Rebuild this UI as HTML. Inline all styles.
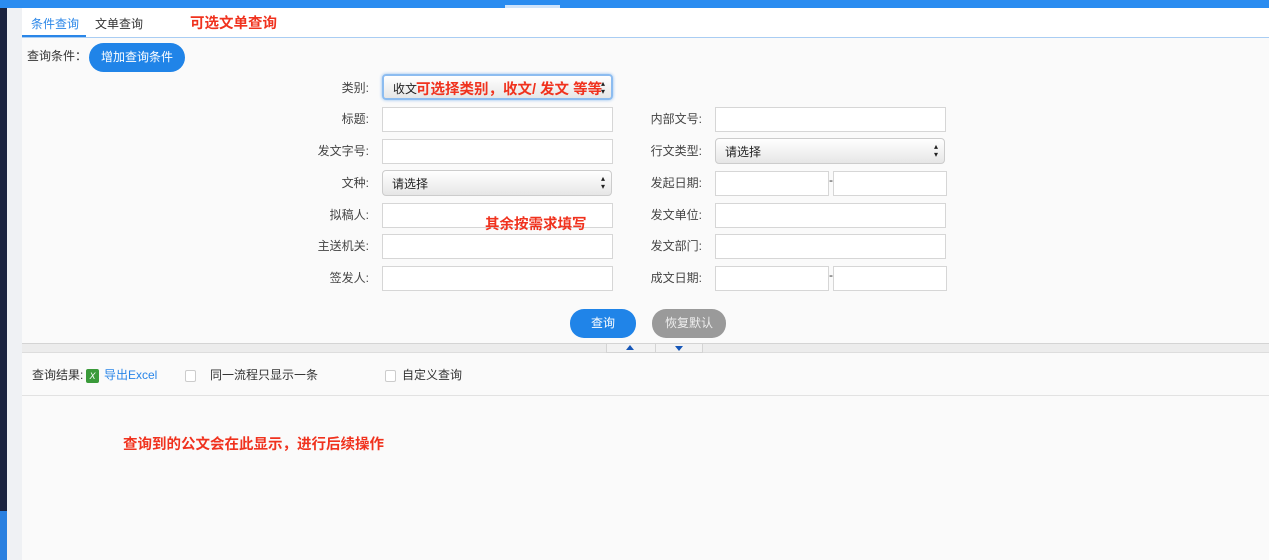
<!DOCTYPE html><html><head><meta charset="utf-8"><style>
*{margin:0;padding:0;box-sizing:border-box}
body{width:1269px;height:560px;overflow:hidden;position:relative;background:#fafafa;font-family:"Liberation Sans","Noto Sans CJK SC",sans-serif;font-size:12px;color:#333}
.a{position:absolute}
.lbl{position:absolute;text-align:right;width:100px;font-size:12px;color:#444}
.in{position:absolute;height:25px;background:#fff;border:1px solid #d6d6d6}
.sel{position:absolute;height:26px;border:1px solid #ccc;border-radius:4px;background:linear-gradient(#fff,#e6e6e6);font-size:12px;padding:4px 0 0 9px;color:#222}
.sel:after{content:"\25B4\A\25BE";white-space:pre;position:absolute;right:6px;top:4px;font-size:8px;line-height:8px;color:#222}
.red{position:absolute;color:#f0321e;font-weight:bold;font-size:14.5px}
</style></head><body>
<div class="a" style="left:0;top:0;width:1269px;height:8px;background:#2a8cf0"></div>
<div class="a" style="left:505px;top:5px;width:55px;height:3px;background:#cfe3fa"></div>
<div class="a" style="left:0;top:8px;width:7px;height:503px;background:#1b2440"></div>
<div class="a" style="left:0;top:511px;width:7px;height:49px;background:#2a80e0"></div>
<div class="a" style="left:7px;top:8px;width:15px;height:552px;background:#eff1f4"></div>
<div class="a" style="left:22px;top:8px;width:1247px;height:29px;background:#fff"></div>
<div class="a" style="left:22px;top:37px;width:1247px;height:1px;background:#a9cdf3"></div>
<div class="a" style="left:22px;top:35px;width:64px;height:2px;background:#2a86e8"></div>
<div class="a" style="left:31px;top:15px;color:#2a86e8;font-size:12px">条件查询</div>
<div class="a" style="left:95px;top:15px;color:#333;font-size:12px">文单查询</div>
<div class="red" style="left:190px;top:12px">可选文单查询</div>
<div class="a" style="left:27px;top:47px;font-size:12px">查询条件：</div>
<div class="a" style="left:89px;top:43px;width:96px;height:29px;border-radius:15px;background:#2084e8;color:#fff;text-align:center;line-height:28px;font-size:12px">增加查询条件</div>

<div class="lbl" style="left:269px;top:79px">类别:</div>
<div class="sel" style="left:382px;top:74px;width:231px;border:2px solid #8cbcf0;box-shadow:0 0 3px #8cbcf0;padding-top:4px">收文</div>
<div class="red" style="left:416px;top:78px">可选择类别，收文/ 发文 等等</div>

<div class="lbl" style="left:269px;top:110px">标题:</div><div class="in" style="left:382px;top:107px;width:231px"></div>
<div class="lbl" style="left:602px;top:110px">内部文号:</div><div class="in" style="left:715px;top:107px;width:231px"></div>
<div class="lbl" style="left:269px;top:142px">发文字号:</div><div class="in" style="left:382px;top:139px;width:231px"></div>
<div class="lbl" style="left:602px;top:142px">行文类型:</div><div class="sel" style="left:715px;top:138px;width:230px">请选择</div>
<div class="lbl" style="left:269px;top:174px">文种:</div><div class="sel" style="left:382px;top:170px;width:230px">请选择</div>
<div class="lbl" style="left:602px;top:174px">发起日期:</div><div class="in" style="left:715px;top:171px;width:114px"></div><div class="a" style="left:829px;top:173px">-</div><div class="in" style="left:833px;top:171px;width:114px"></div>
<div class="lbl" style="left:269px;top:206px">拟稿人:</div><div class="in" style="left:382px;top:203px;width:231px"></div>
<div class="red" style="left:485px;top:213px">其余按需求填写</div>
<div class="lbl" style="left:602px;top:206px">发文单位:</div><div class="in" style="left:715px;top:203px;width:231px"></div>
<div class="lbl" style="left:269px;top:237px">主送机关:</div><div class="in" style="left:382px;top:234px;width:231px"></div>
<div class="lbl" style="left:602px;top:237px">发文部门:</div><div class="in" style="left:715px;top:234px;width:231px"></div>
<div class="lbl" style="left:269px;top:269px">签发人:</div><div class="in" style="left:382px;top:266px;width:231px"></div>
<div class="lbl" style="left:602px;top:269px">成文日期:</div><div class="in" style="left:715px;top:266px;width:114px"></div><div class="a" style="left:829px;top:268px">-</div><div class="in" style="left:833px;top:266px;width:114px"></div>

<div class="a" style="left:570px;top:309px;width:66px;height:29px;border-radius:14px;background:#2084e8;color:#fff;text-align:center;line-height:28px">查询</div>
<div class="a" style="left:652px;top:309px;width:74px;height:29px;border-radius:14px;background:#9a9a9a;color:#eee;text-align:center;line-height:28px">恢复默认</div>

<div class="a" style="left:22px;top:343px;width:1247px;height:10px;background:#ececec;border-top:1px solid #d4d4d4;border-bottom:1px solid #ddd"></div>
<div class="a" style="left:606px;top:344px;width:97px;height:9px;border:1px solid #d4d4d4;border-top:none;background:#f2f2f2"></div>
<div class="a" style="left:655px;top:344px;width:1px;height:9px;background:#d4d4d4"></div>
<div class="a" style="left:626px;top:345px;width:0;height:0;border-left:4px solid transparent;border-right:4px solid transparent;border-bottom:5px solid #1556b8"></div>
<div class="a" style="left:675px;top:346px;width:0;height:0;border-left:4px solid transparent;border-right:4px solid transparent;border-top:5px solid #1556b8"></div>

<div class="a" style="left:32px;top:366px">查询结果:</div>
<div class="a" style="left:86px;top:369px;width:13px;height:14px;background:#3a9a3a;border-radius:2px;color:#fff;font-size:9px;text-align:center;line-height:14px;font-style:italic">X</div>
<div class="a" style="left:104px;top:366px;color:#2a86e8">导出Excel</div>
<div class="a" style="left:185px;top:370px;width:11px;height:12px;border:1px solid #ccc;border-radius:2px;background:#fff"></div>
<div class="a" style="left:210px;top:366px">同一流程只显示一条</div>
<div class="a" style="left:385px;top:370px;width:11px;height:12px;border:1px solid #ccc;border-radius:2px;background:#fff"></div>
<div class="a" style="left:402px;top:366px">自定义查询</div>
<div class="a" style="left:22px;top:395px;width:1247px;height:1px;background:#e2e2e2"></div>
<div class="red" style="left:123px;top:433px">查询到的公文会在此显示，进行后续操作</div>
</body></html>
